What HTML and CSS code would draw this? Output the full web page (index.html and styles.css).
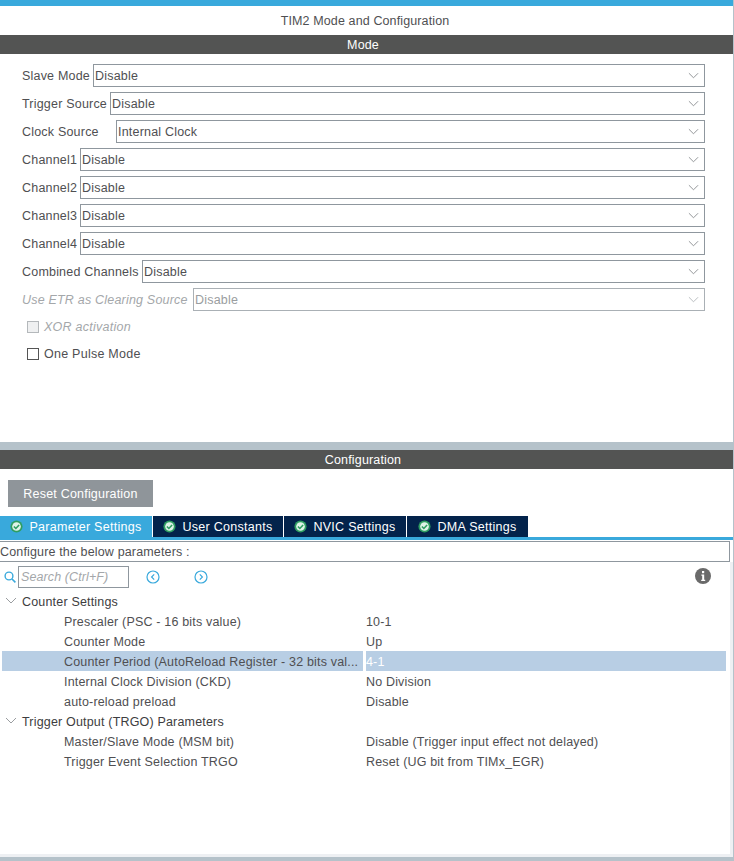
FILE: index.html
```html
<!DOCTYPE html>
<html lang="en">
<head>
<meta charset="utf-8">
<title>TIM2 Mode and Configuration</title>
<link rel="stylesheet" href="styles.css">
</head>
<body>
<svg class="defs" width="0" height="0" aria-hidden="true">
  <symbol id="chev" viewBox="0 0 12 7"><path d="M1 1l5 5 5-5" fill="none" stroke="currentColor" stroke-width="1"/></symbol>
  <symbol id="ok" viewBox="0 0 12 12"><circle cx="6" cy="6" r="5.6" fill="#2f9e62"/><circle cx="6" cy="6" r="4" fill="#dff3e8"/><path d="M3.6 6l1.8 1.8 3-3.2" fill="none" stroke="#2f9e62" stroke-width="1.5"/></symbol>
</svg>
<div class="app">
  <div class="topbar"></div>
  <div class="title">TIM2 Mode and Configuration</div>
  <div class="band">Mode</div>
  <section class="mode">
    <div class="field"><span class="lbl w-slave">Slave Mode</span><div class="sel">Disable<svg class="chev"><use href="#chev"/></svg></div></div>
    <div class="field"><span class="lbl w-trig">Trigger Source</span><div class="sel">Disable<svg class="chev"><use href="#chev"/></svg></div></div>
    <div class="field"><span class="lbl w-clock">Clock Source</span><div class="sel">Internal Clock<svg class="chev"><use href="#chev"/></svg></div></div>
    <div class="field"><span class="lbl w-ch">Channel1</span><div class="sel">Disable<svg class="chev"><use href="#chev"/></svg></div></div>
    <div class="field"><span class="lbl w-ch">Channel2</span><div class="sel">Disable<svg class="chev"><use href="#chev"/></svg></div></div>
    <div class="field"><span class="lbl w-ch">Channel3</span><div class="sel">Disable<svg class="chev"><use href="#chev"/></svg></div></div>
    <div class="field"><span class="lbl w-ch">Channel4</span><div class="sel">Disable<svg class="chev"><use href="#chev"/></svg></div></div>
    <div class="field"><span class="lbl w-comb">Combined Channels</span><div class="sel">Disable<svg class="chev"><use href="#chev"/></svg></div></div>
    <div class="field off"><span class="lbl w-etr">Use ETR as Clearing Source</span><div class="sel">Disable<svg class="chev"><use href="#chev"/></svg></div></div>
    <div class="check off first"><span class="box"></span><span>XOR activation</span></div>
    <div class="check"><span class="box"></span><span>One Pulse Mode</span></div>
  </section>
  <div class="splitter"></div>
  <div class="band">Configuration</div>
  <button class="reset" type="button">Reset Configuration</button>
  <div class="tabs">
    <div class="tab active w1"><svg class="ok"><use href="#ok"/></svg>Parameter Settings</div>
    <div class="tab w2"><svg class="ok"><use href="#ok"/></svg>User Constants</div>
    <div class="tab w3"><svg class="ok"><use href="#ok"/></svg>NVIC Settings</div>
    <div class="tab w4"><svg class="ok"><use href="#ok"/></svg>DMA Settings</div>
  </div>
  <div class="hint">Configure the below parameters :</div>
  <div class="searchrow">
    <svg class="mag" viewBox="0 0 12 12"><circle cx="5" cy="5" r="3.9" fill="none" stroke="#39a9dc" stroke-width="1.4"/><path d="M8 8l3.4 3.4" stroke="#39a9dc" stroke-width="1.6"/></svg>
    <div class="search">Search (Ctrl+F)</div>
    <svg class="nav first" viewBox="0 0 14 14"><circle cx="7" cy="7" r="6" fill="none" stroke="#39a9dc" stroke-width="1.2"/><path d="M8.2 4.4L5.6 7l2.6 2.6" fill="none" stroke="#39a9dc" stroke-width="1.2"/></svg>
    <svg class="nav" viewBox="0 0 14 14"><circle cx="7" cy="7" r="6" fill="none" stroke="#39a9dc" stroke-width="1.2"/><path d="M5.8 4.4L8.4 7l-2.6 2.6" fill="none" stroke="#39a9dc" stroke-width="1.2"/></svg>
    <svg class="info" viewBox="0 0 16 16"><circle cx="8" cy="8" r="8" fill="#6a6a6a"/><rect x="7" y="3" width="2.2" height="2.2" fill="#fff"/><path d="M6.4 6.6h2.8v5.2h1v1.2H6.2v-1.2h1V7.8h-.8z" fill="#fff"/></svg>
  </div>
  <div class="tree">
    <div class="row group"><svg class="tw"><use href="#chev"/></svg>Counter Settings</div>
    <div class="row"><span class="k">Prescaler (PSC - 16 bits value)</span><span class="v">10-1</span></div>
    <div class="row"><span class="k">Counter Mode</span><span class="v">Up</span></div>
    <div class="row sel-row"><span class="k">Counter Period (AutoReload Register - 32 bits val...</span><span class="v">4-1</span></div>
    <div class="row"><span class="k">Internal Clock Division (CKD)</span><span class="v">No Division</span></div>
    <div class="row"><span class="k">auto-reload preload</span><span class="v">Disable</span></div>
    <div class="row group"><svg class="tw"><use href="#chev"/></svg>Trigger Output (TRGO) Parameters</div>
    <div class="row"><span class="k">Master/Slave Mode (MSM bit)</span><span class="v">Disable (Trigger input effect not delayed)</span></div>
    <div class="row"><span class="k">Trigger Event Selection TRGO</span><span class="v">Reset (UG bit from TIMx_EGR)</span></div>
  </div>
  <div class="foot"></div>
</div>
</body>
</html>
```
FILE: styles.css
```css
* { box-sizing: border-box; }
html, body { margin: 0; padding: 0; background: #fff; }
body { font-family: "Liberation Sans", Arial, sans-serif; font-size: 12.5px; color: #4f4f52; overflow: hidden; }
.defs { position: absolute; }
.app { position: relative; width: 734px; height: 861px; display: flex; flex-direction: column; border-right: 1px solid #b5c2ca; overflow: hidden; }
.topbar { height: 6px; flex: none; margin-right: -1px; background: #39a9dc; }
.title { height: 29px; flex: none; line-height: 30px; padding-right: 3px; text-align: center; letter-spacing: .12px; }
.band { height: 19px; flex: none; line-height: 21px; padding-right: 7px; text-align: center; background: #535453; color: #fff; letter-spacing: .15px; }
.mode { height: 388px; flex: none; padding: 10px 28px 0 22px; }
.field { display: flex; height: 23px; margin-bottom: 5px; align-items: stretch; }
.lbl { flex: none; line-height: 25px; white-space: nowrap; letter-spacing: .2px; }
.w-slave { width: 71px; }
.w-trig { width: 88px; }
.w-clock { width: 94px; }
.w-ch { width: 58px; }
.w-comb { width: 120px; }
.w-etr { width: 171px; }
.sel { flex: 1; position: relative; border: 1px solid #8f979e; line-height: 23px; padding-left: 1px; letter-spacing: .2px; }
.chev { position: absolute; right: 5px; top: 7px; width: 11px; height: 7px; color: #8a8d90; }
.field.off .lbl { font-style: italic; color: #a4a7aa; }
.field.off .sel { color: #9a9da0; border-color: #aab0b5; }
.field.off .chev { color: #b4b8bb; }
.check { display: flex; align-items: center; height: 15px; margin: 12px 0 0 5px; gap: 5px; letter-spacing: .25px; }
.check.first { margin-top: 8px; }
.box { width: 12px; height: 12px; border: 1px solid #555; background: #fff; }
.check.off { font-style: italic; color: #a4a7aa; }
.check.off .box { border-color: #b4b8bb; background: #eff0f1; }
.splitter { height: 8px; flex: none; background: #b5c2ca; }
.reset { flex: none; align-self: flex-start; width: 145px; height: 27px; margin: 11px 0 9px 8px; border: 0; padding: 0; background: #8f959a; color: #fff; font: inherit; letter-spacing: .2px; }
.tabs { display: flex; flex: none; height: 24px; padding-right: 1px; border-bottom: 3px solid #39a9dc; }
.tab { height: 21px; background: #03234b; color: #fff; display: flex; align-items: center; justify-content: center; gap: 6px; border-right: 1px solid #fff; letter-spacing: .28px; white-space: nowrap; }
.tab.active { background: #39a9dc; }
.w1 { width: 153px; }
.w2 { width: 131px; }
.w3 { width: 123px; }
.w4 { width: 121px; border-right: 0; }
.ok { width: 13px; height: 13px; flex: none; }
.hint { height: 21px; flex: none; width: 730px; margin-top: 1px; border: 1px solid #8f979e; border-left: 0; line-height: 21px; letter-spacing: .15px; }
.searchrow { position: relative; display: flex; align-items: center; flex: none; height: 29px; width: 733px; padding-left: 4px; border-right: 3px solid #eef0f3; }
.mag { width: 12px; height: 12px; flex: none; }
.search { width: 111px; height: 22px; margin-left: 2px; border: 1px solid #8f979e; line-height: 20px; padding-left: 2px; font-style: italic; color: #a4a7aa; letter-spacing: .1px; }
.nav { width: 14px; height: 14px; flex: none; margin-left: 34px; }
.nav.first { margin-left: 17px; }
.info { width: 16px; height: 16px; position: absolute; left: 695px; top: 6px; }
.tree { flex: 1; width: 733px; padding: 0 4px 0 2px; border-right: 3px solid #eef0f3; }
.row { display: flex; height: 20px; line-height: 22px; white-space: nowrap; }
.row.group { color: #3d3d40; padding-left: 20px; position: relative; letter-spacing: .18px; }
.tw { position: absolute; left: 3px; top: 6px; width: 12px; height: 7px; color: #9a9da0; }
.k { width: 361px; padding-left: 62px; flex: none; letter-spacing: .18px; }
.v { margin-left: 3px; flex: 1; letter-spacing: .17px; }
.sel-row .k { background: #b8cee4; }
.sel-row .v { background: #b8cee4; color: #fff; }
.foot { height: 7px; flex: none; border-top: 3px solid #eef0f3; border-bottom: 4px solid #b5c2ca; }
```
